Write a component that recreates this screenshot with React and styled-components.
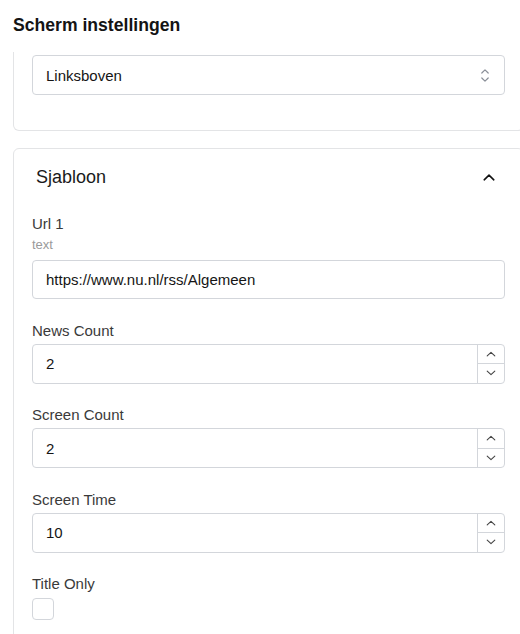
import React from "react";
import styled, { createGlobalStyle } from "styled-components";

const Global = createGlobalStyle`
  html, body { margin: 0; padding: 0; background: #fff; overflow: hidden; }
  body { font-family: "Liberation Sans", Arial, sans-serif; color: #1f1f1f; }
  * { box-sizing: border-box; }
`;

const Page = styled.div`
  width: 520px;
  height: 634px;
  overflow: hidden;
  padding-left: 13px;
`;

const Title = styled.h1`
  margin: 0;
  height: 52px;
  padding-top: 14px;
  font-size: 17.6px;
  line-height: 22px;
  font-weight: 700;
  color: #141414;
`;

const Panel = styled.section`
  width: 511px;
  border: 1px solid #e3e4e6;
  border-top: ${(p) => (p.$cut ? "none" : "1px solid #e3e4e6")};
  border-radius: ${(p) => (p.$cut ? "0 0 6px 6px" : "6px")};
  padding: ${(p) => (p.$cut ? "3px 18px 35px 18px" : "0 18px 30px 18px")};
  margin-bottom: 17px;
  background: #fff;
`;

const PanelHeader = styled.div`
  display: flex;
  align-items: center;
  justify-content: space-between;
  height: 56px;
  margin: 0 -18px 9px -18px;
  padding: 0 28px 0 22px;
  font-size: 18px;
  color: #1a1a1a;
`;

const Field = styled.div`
  display: flex;
  flex-direction: column;
  margin-bottom: 21.5px;
`;

const Label = styled.label`
  font-size: 15px;
  line-height: 20px;
  color: #3a3a3a;
  margin-bottom: ${(p) => (p.$hint ? "2px" : "3px")};
`;

const Hint = styled.div`
  font-size: 13px;
  line-height: 18px;
  color: #9a9a9a;
  margin-bottom: 6px;
`;

const Box = styled.div`
  position: relative;
  display: flex;
  align-items: center;
  width: 473px;
  height: ${(p) => p.$h || 40}px;
  border: 1px solid #d3d6db;
  border-radius: 4px;
  background: #fff;
  overflow: hidden;
`;

const Value = styled.span`
  flex: 1;
  padding-left: 13px;
  font-size: 15px;
  color: #151515;
`;

const SelectIcon = styled.span`
  display: flex;
  width: 27px;
  margin-right: 6px;
  justify-content: center;
`;

const Spinner = styled.div`
  display: flex;
  flex-direction: column;
  width: 27px;
  height: 100%;
  border-left: 1px solid #d3d6db;
`;

const SpinBtn = styled.div`
  flex: 1;
  display: flex;
  align-items: center;
  justify-content: center;
  & + & { border-top: 1px solid #d3d6db; }
`;

const Checkbox = styled.div`
  width: 22px;
  height: 22px;
  margin-top: 1px;
  border: 1px solid #d3d6db;
  border-radius: 4px;
`;

const Up = () => (
  <svg width="10" height="6" viewBox="0 0 10 6" fill="none">
    <path d="M1.2 4.8L5 1.3L8.8 4.8" stroke="#444" strokeWidth="1.1" strokeLinecap="round" strokeLinejoin="round" />
  </svg>
);
const Down = () => (
  <svg width="10" height="6" viewBox="0 0 10 6" fill="none">
    <path d="M1.2 1.2L5 4.7L8.8 1.2" stroke="#444" strokeWidth="1.1" strokeLinecap="round" strokeLinejoin="round" />
  </svg>
);

const NumberField = ({ label, value }) => (
  <Field>
    <Label>{label}</Label>
    <Box>
      <Value>{value}</Value>
      <Spinner>
        <SpinBtn><Up /></SpinBtn>
        <SpinBtn><Down /></SpinBtn>
      </Spinner>
    </Box>
  </Field>
);

export default function App() {
  return (
    <>
      <Global />
      <Page>
        <Title>Scherm instellingen</Title>
        <Panel $cut>
          <Box>
            <Value>Linksboven</Value>
            <SelectIcon>
              <svg width="10" height="15" viewBox="0 0 10 15" fill="none">
                <path d="M1.8 5L5 1.8L8.2 5" stroke="#8a8f98" strokeWidth="1.2" strokeLinecap="round" strokeLinejoin="round" />
                <path d="M1.8 10L5 13.2L8.2 10" stroke="#8a8f98" strokeWidth="1.2" strokeLinecap="round" strokeLinejoin="round" />
              </svg>
            </SelectIcon>
          </Box>
        </Panel>
        <Panel>
          <PanelHeader>
            <span>Sjabloon</span>
            <svg width="12" height="7" viewBox="0 0 12 7" fill="none">
              <path d="M1.2 5.8L6 1.2L10.8 5.8" stroke="#111" strokeWidth="1.6" strokeLinecap="round" strokeLinejoin="round" />
            </svg>
          </PanelHeader>
          <Field>
            <Label $hint>Url 1</Label>
            <Hint>text</Hint>
            <Box $h={39}>
              <Value>https://www.nu.nl/rss/Algemeen</Value>
            </Box>
          </Field>
          <NumberField label="News Count" value="2" />
          <NumberField label="Screen Count" value="2" />
          <NumberField label="Screen Time" value="10" />
          <Field>
            <Label>Title Only</Label>
            <Checkbox />
          </Field>
        </Panel>
      </Page>
    </>
  );
}
